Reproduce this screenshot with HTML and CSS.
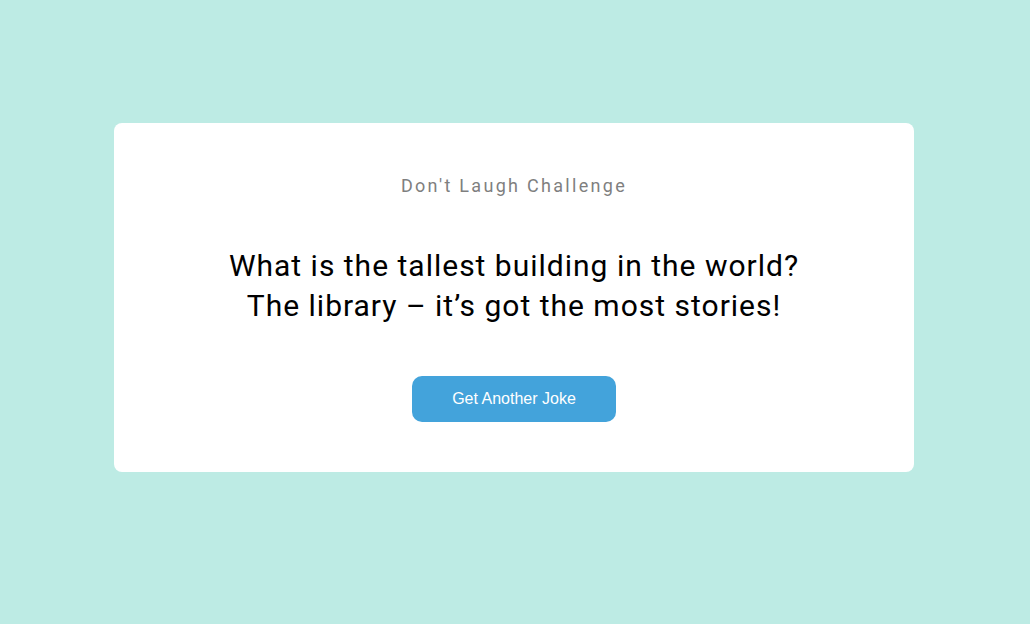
FILE: index.html
```html
<!DOCTYPE html>
<html>
<head>
<meta charset="utf-8">
<link rel="stylesheet" href="styles.css">
</head>
<body>
<div class="page">
  <div class="card">
    <h3 class="title">Don't Laugh Challenge</h3>
    <div class="joke">What is the tallest building in the world?<br>The library – it’s got the most stories!</div>
    <button class="btn">Get Another Joke</button>
  </div>
</div>
</body>
</html>
```
FILE: styles.css
```css
html, body {
  margin: 0;
  padding: 0;
  height: 100%;
}
body {
  background: #bdebe4;
  font-family: Roboto, "Liberation Sans", sans-serif;
}
.page {
  display: flex;
  justify-content: center;
  padding: 123px 2px 0 0;
}
.card {
  width: 800px;
  box-sizing: border-box;
  background: #ffffff;
  border-radius: 8px;
  display: flex;
  flex-direction: column;
  align-items: center;
  padding: 52px 20px 50px;
  text-align: center;
}
.title {
  margin: 0;
  font-size: 18px;
  font-weight: 400;
  line-height: 21px;
  letter-spacing: 2.3px;
  color: #7f7f7f;
}
.joke {
  margin-top: 50px;
  font-size: 30px;
  line-height: 40px;
  letter-spacing: 1px;
  color: #000;
}
.btn {
  margin-top: 50px;
  width: 204px;
  height: 46px;
  border: none;
  border-radius: 10px;
  background: #43a3db;
  color: #fff;
  font-family: "Liberation Sans", Arial, sans-serif;
  font-size: 16px;
  padding: 0;
}
```
